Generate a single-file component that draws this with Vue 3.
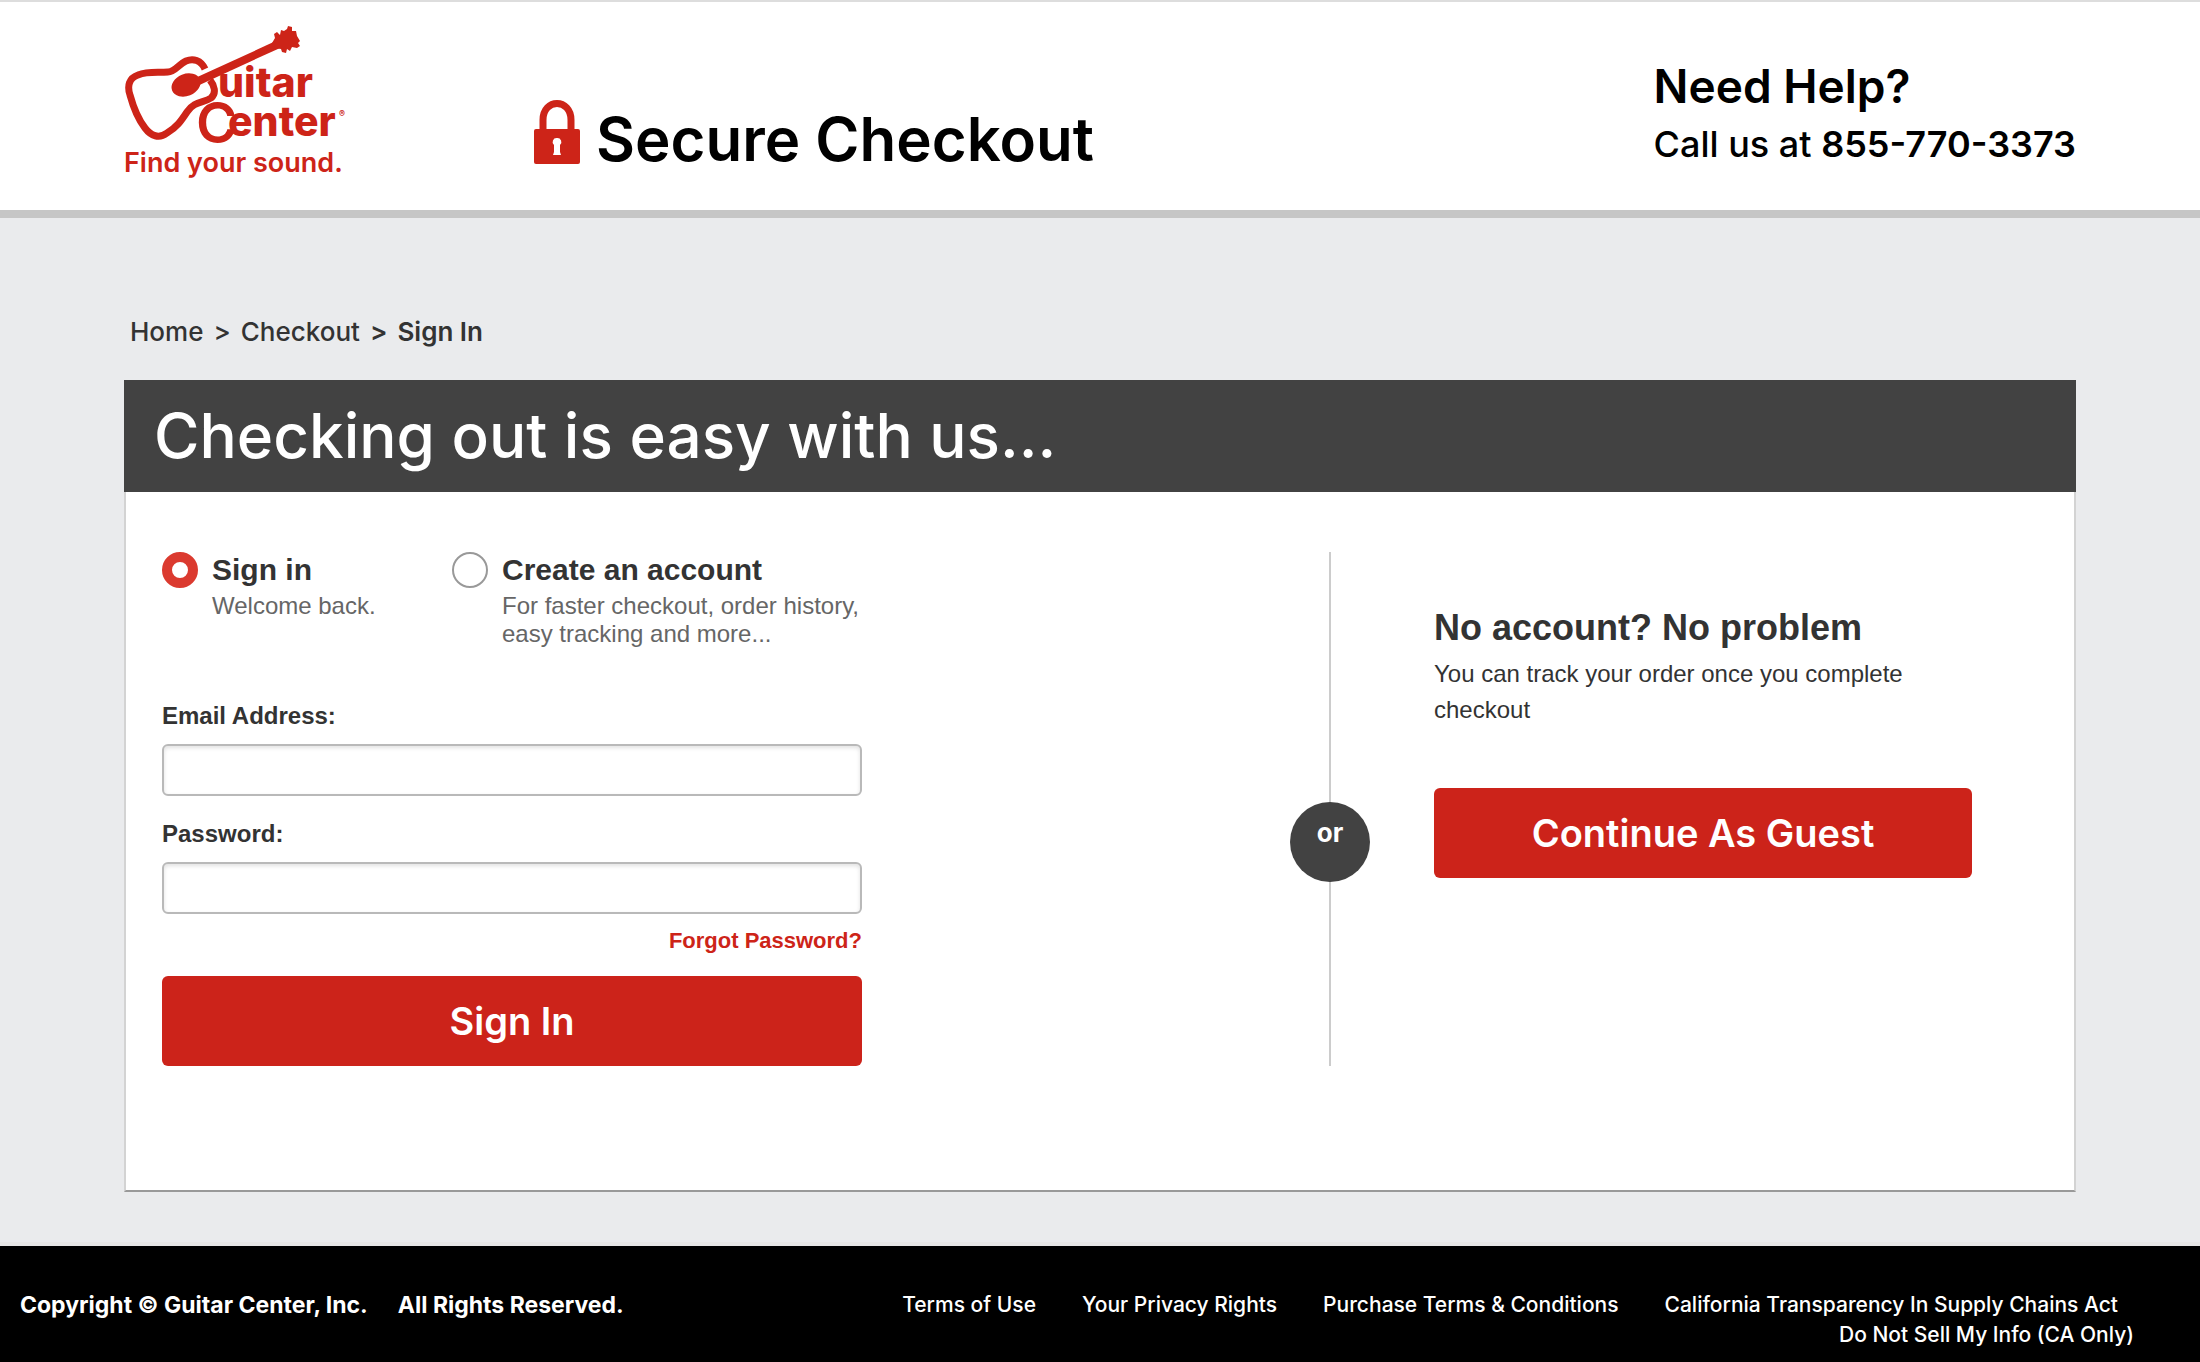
<script setup>
import { ref } from 'vue'

const mode = ref('signin')
const email = ref('')
const password = ref('')

const modes = [
  { value: 'signin', title: 'Sign in', lines: ['Welcome back.'] },
  {
    value: 'create',
    title: 'Create an account',
    lines: ['For faster checkout, order history,', 'easy tracking and more...'],
  },
]

const footerLinks = [
  'Terms of Use',
  'Your Privacy Rights',
  'Purchase Terms & Conditions',
  'California Transparency In Supply Chains Act',
]
</script>

<template>
  <div class="page">
    <header class="site-header">
      <div class="container header-row">
        <a class="logo" href="#" aria-label="Guitar Center">
          <svg width="224" height="158" viewBox="0 0 224 158">
            <g fill="none" stroke="#cd2418" stroke-width="7" stroke-linejoin="round">
              <path d="M81 45C77 36 69 34 62 37C55 40 51 48 44 48C34 49 24 47 14 51C5 54 3 62 6 71C9 82 14 95 21 104C27 112 35 115 43 109C53 103 57 97 63 88C70 77 80 79 87 74C93 69 90 61 86 56" />
              <path d="M70 59L155 20" stroke-width="8" />
            </g>
            <g fill="#cd2418">
              <ellipse cx="62" cy="61" rx="15" ry="11" transform="rotate(-22 62 61)" />
              <path d="M151 14L150 10L153 8L156 11L157 6L160 7L163 5L164 2L168 3L168 7L172 7L173 12L176 17L174 19L176 22L173 24L168 23L166 27L163 25L162 29L158 28L157 25L151 24L148 19Z" />
            </g>
            <text class="logo-name" x="94" y="73">uitar</text>
            <text class="logo-name" x="72" y="119">
              <tspan class="logo-cap">C</tspan><tspan x="104" y="112">enter</tspan><tspan class="logo-mark" x="215" y="93">®</tspan>
            </text>
            <text class="logo-tag" x="0" y="148">Find your sound.</text>
          </svg>
        </a>
        <h1 class="secure">
          <svg width="46" height="64" viewBox="0 0 46 64">
            <path d="M9 32V20C9 -2 37 -2 37 20V32" fill="none" stroke="#cd2418" stroke-width="7" />
            <rect y="29" width="46" height="35" rx="2" fill="#cd2418" />
            <path d="M23 38a4 4 0 0 1 3 7v7l1 3h-8l1-3v-7a4 4 0 0 1 3-7z" fill="#fff" />
          </svg>
          <span>Secure Checkout</span>
        </h1>
        <div class="help">
          <p class="help-title">Need Help?</p>
          <p class="help-call">Call us at <strong>855-770-3373</strong></p>
        </div>
      </div>
    </header>

    <main class="container main">
      <nav class="crumbs" aria-label="Breadcrumb">
        <a href="#">Home</a>
        <span>&gt;</span>
        <a href="#">Checkout</a>
        <b>&gt;</b>
        <b>Sign In</b>
      </nav>

      <section class="panel">
        <h2 class="panel-title">Checking out is easy with us...</h2>
        <div class="panel-body">
          <form class="form" @submit.prevent>
            <div class="modes">
              <label v-for="m in modes" :key="m.value" class="mode">
                <input v-model="mode" type="radio" name="mode" :value="m.value" />
                <span>
                  <span class="mode-title">{{ m.title }}</span>
                  <span v-for="line in m.lines" :key="line" class="mode-line">{{ line }}</span>
                </span>
              </label>
            </div>
            <div class="field">
              <label for="email">Email Address:</label>
              <input id="email" v-model="email" type="email" />
            </div>
            <div class="field">
              <label for="password">Password:</label>
              <input id="password" v-model="password" type="password" />
            </div>
            <a class="forgot" href="#">Forgot Password?</a>
            <button class="btn" type="submit">Sign In</button>
          </form>

          <div class="divider"><span>or</span></div>

          <div class="guest">
            <h3>No account? No problem</h3>
            <p>You can track your order once you complete checkout</p>
            <button class="btn" type="button">Continue As Guest</button>
          </div>
        </div>
      </section>
    </main>

    <footer class="site-footer">
      <p class="copyright">
        <span>Copyright © Guitar Center, Inc.</span>
        <span>All Rights Reserved.</span>
      </p>
      <nav class="footer-nav" aria-label="Footer">
        <div class="footer-links">
          <a v-for="link in footerLinks" :key="link" href="#">{{ link }}</a>
        </div>
        <a href="#">Do Not Sell My Info (CA Only)</a>
      </nav>
    </footer>
  </div>
</template>

<style>
body {
  margin: 0;
  background: #eaebed;
}
</style>

<style scoped>
.page {
  color: #333;
  font-family: "Liberation Sans", Arial, sans-serif;
  font-size: 24px;
}
h1, h2, h3, p {
  margin: 0;
}
a {
  color: inherit;
  text-decoration: none;
}
.container {
  box-sizing: border-box;
  max-width: 1952px;
  margin: 0 auto;
}
.site-header {
  background: #fff;
  border-top: 2px solid #ddd;
  border-bottom: 8px solid #c6c6c6;
  color: #000;
  font-family: Inter, sans-serif;
}
.header-row {
  display: flex;
  align-items: flex-start;
  height: 208px;
}
.logo {
  margin-top: 22px;
}
.logo svg {
  display: block;
}
.logo text {
  fill: #cd2418;
  font-family: Inter, sans-serif;
}
.logo .logo-name {
  font-size: 41px;
  font-weight: 800;
}
.logo .logo-cap {
  font-size: 56px;
  font-weight: 600;
}
.logo .logo-mark {
  font-size: 9px;
  font-weight: 700;
}
.logo .logo-tag {
  font-size: 27px;
  font-weight: 600;
}
.secure {
  display: flex;
  align-items: center;
  gap: 16px;
  margin: 98px 0 0 186px;
  font-size: 60px;
  font-weight: 600;
  line-height: 78px;
}
.secure svg {
  align-self: flex-start;
}
.help {
  margin: 56px 0 0 auto;
}
.help-title {
  font-size: 46px;
  font-weight: 600;
  line-height: 56px;
}
.help-call {
  font-size: 36px;
  font-weight: 500;
  line-height: 60px;
}
.help-call strong {
  font-weight: 600;
}
.main {
  padding-bottom: 50px;
}
.crumbs {
  display: flex;
  gap: 10px;
  padding: 96px 6px 30px;
  font-family: Inter, sans-serif;
  font-size: 26px;
  font-weight: 500;
  line-height: 36px;
}
.crumbs b {
  font-weight: 600;
}
.panel-title {
  padding: 0 30px;
  background: #424242;
  color: #fff;
  font-family: Inter, sans-serif;
  font-size: 62px;
  font-weight: 500;
  line-height: 112px;
}
.panel-body {
  display: flex;
  padding: 60px 102px 124px 36px;
  background: #fff;
  border: 2px solid #d3d3d3;
  border-top: 0;
  border-bottom-color: #999;
}
.form {
  width: 700px;
}
.modes {
  display: flex;
  margin-bottom: 54px;
}
.mode {
  display: flex;
  gap: 14px;
  min-width: 290px;
}
.mode input {
  appearance: none;
  box-sizing: border-box;
  flex: none;
  width: 36px;
  height: 36px;
  margin: 0;
  border: 2px solid #999;
  border-radius: 50%;
  background: #fff;
}
.mode input:checked {
  border: 10px solid #db3a2f;
}
.mode-title {
  display: block;
  margin-bottom: 4px;
  font-size: 30px;
  font-weight: 700;
  line-height: 36px;
}
.mode-line {
  display: block;
  color: #666;
  line-height: 28px;
  white-space: nowrap;
}
.field {
  margin-bottom: 24px;
}
.field label {
  display: block;
  margin-bottom: 14px;
  font-weight: 700;
  line-height: 28px;
}
.field input {
  display: block;
  box-sizing: border-box;
  width: 100%;
  height: 52px;
  padding: 0 12px;
  border: 2px solid #b9b9b9;
  border-radius: 6px;
  background: #fff;
  box-shadow: inset 0 2px 4px rgba(0, 0, 0, 0.12);
  font: inherit;
}
.forgot {
  display: block;
  width: fit-content;
  margin: -12px 0 20px auto;
  color: #cd2418;
  font-size: 22px;
  font-weight: 700;
  line-height: 30px;
}
.btn {
  display: block;
  width: 100%;
  height: 90px;
  padding: 0;
  border: 0;
  border-radius: 6px;
  background: #cc231a;
  color: #fff;
  font-family: Inter, sans-serif;
  font-size: 38px;
  font-weight: 600;
}
.divider {
  width: 80px;
  margin-left: auto;
  background: linear-gradient(#ccc, #ccc) center / 2px 100% no-repeat;
}
.divider span {
  display: block;
  height: 80px;
  margin-top: 250px;
  border-radius: 50%;
  background: #424242;
  color: #fff;
  font-family: Inter, sans-serif;
  font-size: 26px;
  font-weight: 700;
  line-height: 62px;
  text-align: center;
}
.guest {
  width: 538px;
  margin: 54px 0 0 64px;
}
.guest h3 {
  margin-bottom: 6px;
  font-size: 36px;
  line-height: 44px;
}
.guest p {
  margin-bottom: 60px;
  line-height: 36px;
}
.site-footer {
  display: flex;
  justify-content: space-between;
  padding: 44px 66px 12px 20px;
  border-top: 4px solid #e6e6e6;
  background: #000;
  color: #fff;
  font-family: Inter, sans-serif;
  font-size: 21px;
  font-weight: 500;
  line-height: 30px;
}
.copyright {
  display: flex;
  gap: 30px;
  font-size: 23px;
  font-weight: 700;
}
.footer-nav {
  text-align: right;
}
.footer-links {
  display: flex;
  gap: 46px;
  padding-right: 16px;
}
</style>
